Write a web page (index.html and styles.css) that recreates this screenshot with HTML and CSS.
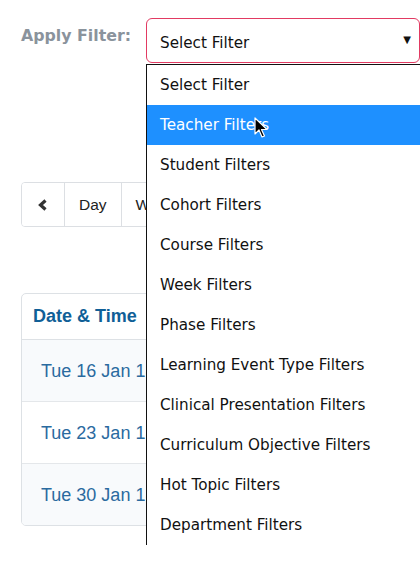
FILE: index.html
```html
<!DOCTYPE html>
<html>
<head>
<meta charset="utf-8">
<link rel="stylesheet" href="styles.css">
</head>
<body>
<div class="page">
  <div class="filter-row">
    <label class="filter-label">Apply Filter:</label>
    <div class="select-wrap">
      <div class="select-box">
        <span>Select Filter</span>
        <span class="arrow">&#9660;</span>
      </div>
      <ul class="dropdown">
        <li>Select Filter</li>
        <li class="active">Teacher Filters</li>
        <li>Student Filters</li>
        <li>Cohort Filters</li>
        <li>Course Filters</li>
        <li>Week Filters</li>
        <li>Phase Filters</li>
        <li>Learning Event Type Filters</li>
        <li>Clinical Presentation Filters</li>
        <li>Curriculum Objective Filters</li>
        <li>Hot Topic Filters</li>
        <li>Department Filters</li>
      </ul>
      <svg class="cursor" width="14" height="22" viewBox="0 0 14 22">
        <path d="M1 1 L1 17 L5 13 L8 20 L10.5 19 L7.5 12.5 L13 12.5 Z" fill="#000" stroke="#fff" stroke-width="1.2" stroke-linejoin="round"/>
      </svg>
    </div>
  </div>

  <div class="btn-group">
    <button class="btn btn-prev">
      <svg width="12" height="12" viewBox="0 0 12 12"><path d="M8.5 1.5 L3.5 6 L8.5 10.5" fill="none" stroke="#333" stroke-width="3.2" stroke-linejoin="miter"/></svg>
    </button>
    <button class="btn">Day</button>
    <button class="btn">Week</button>
  </div>

  <div class="table">
    <div class="thead">Date &amp; Time</div>
    <div class="row odd">Tue 16 Jan 18</div>
    <div class="row">Tue 23 Jan 18</div>
    <div class="row odd">Tue 30 Jan 18</div>
  </div>
</div>
</body>
</html>
```

FILE: styles.css
```css
html, body {
  margin: 0;
  padding: 0;
  background: #fff;
}
.page {
  width: 420px;
  height: 570px;
  overflow: hidden;
  padding-left: 21px;
  box-sizing: border-box;
}
.filter-row {
  display: flex;
  align-items: flex-start;
  padding-top: 18px;
}
.filter-label {
  font-family: "DejaVu Sans", sans-serif;
  font-weight: bold;
  font-size: 15.8px;
  color: #8a939c;
  margin-top: 8px;
  width: 125px;
  white-space: nowrap;
}
.select-wrap {
  position: relative;
  width: 274px;
}
.select-box {
  height: 45px;
  box-sizing: border-box;
  border: 1.5px solid #e23a62;
  border-radius: 6px;
  display: flex;
  align-items: center;
  justify-content: space-between;
  padding: 4px 8px 0 13px;
  font-family: "DejaVu Sans", sans-serif;
  font-size: 15.2px;
  color: #111;
}
.arrow {
  font-size: 10px;
  font-family: "DejaVu Sans", sans-serif;
  margin-top: -6px;
}
.dropdown {
  position: absolute;
  left: 0;
  top: 46px;
  width: 280px;
  margin: 0;
  padding: 0;
  list-style: none;
  background: #fff;
  border-left: 1.5px solid #111;
  border-top: 1px solid #111;
  font-family: "DejaVu Sans", sans-serif;
  font-size: 15.2px;
  color: #111;
}
.dropdown li {
  height: 40px;
  line-height: 41px;
  padding-left: 13px;
  white-space: nowrap;
}
.dropdown li.active {
  background: #1e90ff;
  color: #fff;
}
.cursor {
  position: absolute;
  left: 108px;
  top: 99px;
}
.btn-group {
  display: inline-flex;
  margin-top: 119px;
  border: 1px solid #dcdfe3;
  border-radius: 4px;
  overflow: hidden;
}
.btn {
  height: 43px;
  border: none;
  border-left: 1px solid #dcdfe3;
  background: #fff;
  font-family: "Liberation Sans", Arial, sans-serif;
  font-size: 15.5px;
  color: #222;
  padding: 0 14px;
  margin: 0;
}
.btn-prev {
  border-left: none;
  width: 42px;
  padding: 0;
  display: flex;
  align-items: center;
  justify-content: center;
}
.table {
  margin-top: 66px;
  width: 420px;
  border: 1px solid #dde1e5;
  border-radius: 5px;
  overflow: hidden;
  font-family: "Liberation Sans", Arial, sans-serif;
  font-size: 18px;
}
.thead {
  height: 45px;
  line-height: 45px;
  padding-left: 11px;
  font-weight: bold;
  color: #105f97;
  border-bottom: 1px solid #dde1e5;
}
.row {
  height: 61px;
  line-height: 63px;
  padding-left: 19px;
  color: #2a6a9f;
  border-bottom: 1px solid #e4e7ea;
}
.row:last-child {
  border-bottom: none;
}
.row.odd {
  background: #f8fafc;
}
```
